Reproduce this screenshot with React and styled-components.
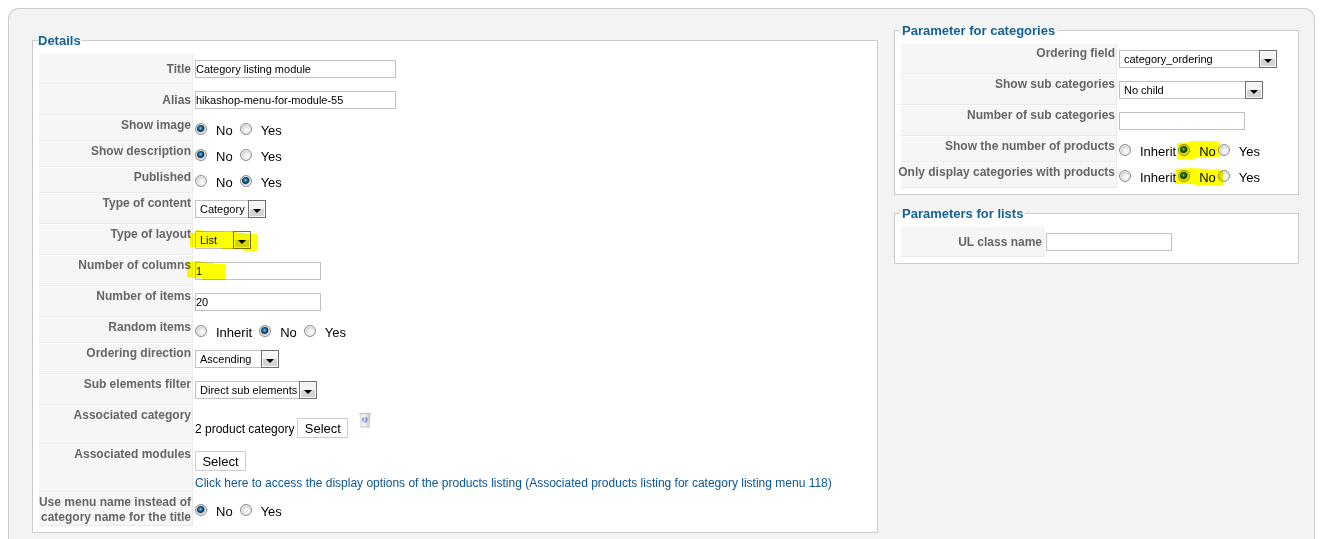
import React from "react";
import styled, { createGlobalStyle } from "styled-components";

const GlobalStyle = createGlobalStyle`
  *, *::before, *::after { box-sizing: border-box; }
  body {
    margin: 0;
    background: #fff;
    color: #000;
    font: 12px/15px "Liberation Sans", Arial, Helvetica, sans-serif;
  }
  input, select, button { margin: 0; font-family: inherit; color: inherit; }
`;

const Page = styled.main`
  display: flex;
  min-height: 100vh;
  padding: 8px 5px 0 8px;
`;

const Panel = styled.form`
  flex: 1;
  display: grid;
  grid-template-columns: minmax(0, 1fr) minmax(405px, 31%);
  align-items: start;
  gap: 16px;
  padding: 14px 15px 6px 23px;
  border: 1px solid #ccc;
  border-bottom: 0;
  border-radius: 11px 11px 0 0;
  background: #f3f3f3;
`;

const MainColumn = styled.div`
  padding-top: 10px;
`;

const SideColumn = styled.div`
  display: flex;
  flex-direction: column;
  gap: 11px;
`;

const Group = styled.fieldset`
  min-width: 0;
  margin: 0;
  padding: 5px;
  border: 1px solid #ccc;
  background: #fff;
`;

const GroupTitle = styled.legend`
  padding: 0 ${(p) => (p.$inset ? 2 : 0)}px;
  color: #146295;
  font-size: 13px;
  font-weight: bold;
`;

const Table = styled.table`
  border-collapse: separate;
  border-spacing: 1px;
`;

const Key = styled.th`
  width: ${(p) => p.$width}px;
  padding: 2px 1px 0 0;
  border-right: 1px solid #e9e9e9;
  border-bottom: 1px solid #e9e9e9;
  background: #f6f6f6;
  color: #666;
  font-weight: bold;
  text-align: right;
  vertical-align: ${(p) => (p.$middle ? "middle" : "top")};
`;

const KeyText = styled.div`
  margin-left: -4px;
`;

const Value = styled.td`
  padding: 1px;
`;

const Field = styled.div`
  position: relative;
  display: flex;
  width: max-content;
  margin: 5px 0;
`;

const TextBox = styled.input`
  width: ${(p) => (p.$long ? 201 : 126)}px;
  height: 18px;
  padding: 0;
  border: 1px solid #c0c0c0;
  background: #fff;
  font-size: 11px;
`;

const Dropdown = styled.select`
  appearance: none;
  width: ${(p) => p.$width}px;
  height: 18px;
  padding: 0 18px 0 4px;
  border: 1px solid #c0c0c0;
  border-radius: 0;
  background: #fff;
  font-size: 11px;
`;

const DropArrow = styled.span`
  position: absolute;
  top: 0;
  right: 0;
  display: flex;
  align-items: flex-end;
  justify-content: center;
  width: 18px;
  height: 18px;
  padding-bottom: 4px;
  border: 1px solid #707070;
  background: linear-gradient(#f4f4f4 50%, #d4d4d4 50%);
  box-shadow: inset 0 0 0 1px #f8f8f8;
  pointer-events: none;
`;

const RadioSet = styled.div`
  position: relative;
  display: flex;
  gap: ${(p) => (p.$tight ? 2 : 7)}px;
  width: max-content;
  padding: 6px 0 2px;
`;

const RadioLabel = styled.label`
  display: flex;
  align-items: baseline;
  gap: 9px;
  font-size: 13px;
`;

const Radio = styled.input`
  appearance: none;
  width: 12px;
  height: 12px;
  border: 1px solid #8e8f8f;
  border-radius: 50%;
  background: radial-gradient(circle at 60% 60%, #f6f6f6 20%, #c4c8cc 75%);
  box-shadow: inset 0 0 0 1px #f0f0f0;

  &:checked {
    background: radial-gradient(circle at 45% 42%, #8fdcff 0, #2a86b8 16%, #0c3c5e 36%, #12304a 40%, #d4d8db 56%);
  }
`;

const PushButton = styled.button`
  min-width: 51px;
  height: 20px;
  padding: 1px 6px 0;
  border: 1px solid #ccc;
  background: #fff;
  font-size: 13px;
  line-height: 17px;
`;

const IconButton = styled.button`
  display: flex;
  padding: 0;
  border: 0;
  background: none;
`;

const CategoryPick = styled.div`
  display: flex;
  align-items: flex-start;
  gap: 9px;
  padding: 5px 0;
`;

const PickedItem = styled.div`
  display: flex;
  align-items: baseline;
  gap: 3px;
  padding-top: 6px;
`;

const ModulePick = styled.div`
  display: flex;
  flex-direction: column;
  align-items: flex-start;
  gap: 5px;
  padding-top: 5px;
`;

const OptionsLink = styled.a`
  color: #0b5590;
  text-decoration: none;
`;

const Marker = styled.svg`
  position: absolute;
  left: ${(p) => p.$left}px;
  top: ${(p) => p.$top}px;
  mix-blend-mode: multiply;
  pointer-events: none;
  fill: #ff0;
`;

const MARKS = {
  layout: { left: -5, top: -1, points: "0,3 6,3 6,0 11,0 11,1 43,2 60,4 68,4 68,20 66,21 53,21 53,19 32,19 32,18 5,17 0,17" },
  columns: { left: -8, top: -1, points: "0,1 6,1 6,0 14,0 14,1 27,2 27,3 38,3 38,19 15,19 15,17 4,17 4,16 0,16" },
  count: { left: 58, top: 3, points: "0,2 13,1 13,0 37,0 42,1 42,16 18,16 18,18 0,18" },
  only: { left: 56, top: 4, points: "0,1 17,0 30,1 44,2 48,3 48,17 38,18 22,18 18,16 0,16" },
};

function Highlight({ mark }) {
  if (!mark) return null;
  const { left, top, points } = MARKS[mark];
  return (
    <Marker $left={left} $top={top} width="70" height="22" aria-hidden="true">
      <polygon points={points} />
    </Marker>
  );
}

function Row({ id, label, keyWidth, middle, children }) {
  return (
    <tr>
      <Key scope="row" $width={keyWidth} $middle={middle}>
        <KeyText>{id ? <label htmlFor={id}>{label}</label> : label}</KeyText>
      </Key>
      <Value>{children}</Value>
    </tr>
  );
}

function TextRow({ id, label, value = "", long, mark, ...row }) {
  return (
    <Row id={id} label={label} {...row}>
      <Field>
        <TextBox id={id} type="text" defaultValue={value} $long={long} />
        <Highlight mark={mark} />
      </Field>
    </Row>
  );
}

function SelectRow({ id, label, value, width, mark, ...row }) {
  return (
    <Row id={id} label={label} {...row}>
      <Field>
        <Dropdown id={id} $width={width}>
          <option>{value}</option>
        </Dropdown>
        <DropArrow>
          <svg width="8" height="6" aria-hidden="true">
            <path d="M0 2h8L4 6z" />
          </svg>
        </DropArrow>
        <Highlight mark={mark} />
      </Field>
    </Row>
  );
}

function RadioRow({ name, label, options = ["No", "Yes"], value, tight, mark, ...row }) {
  return (
    <Row label={label} {...row}>
      <RadioSet role="radiogroup" aria-label={label} $tight={tight}>
        {options.map((option) => (
          <RadioLabel key={option}>
            <Radio type="radio" name={name} value={option} defaultChecked={option === value} />
            {option}
          </RadioLabel>
        ))}
        <Highlight mark={mark} />
      </RadioSet>
    </Row>
  );
}

function TrashIcon() {
  return (
    <svg width="16" height="16" viewBox="0 0 16 16" aria-hidden="true">
      <defs>
        <linearGradient id="bin" x1="0" x2="1">
          <stop offset="0" stopColor="#dcdcdc" />
          <stop offset="0.45" stopColor="#f7f7f7" />
          <stop offset="1" stopColor="#bdbdbd" />
        </linearGradient>
      </defs>
      <path d="M2.5 1.5h11l-1 14h-9z" fill="url(#bin)" />
      <path d="M2 .8h12v1.4H2z" fill="#d6d6d6" />
      <path d="M3 1.2h10v.6H3z" fill="#b4b4b4" />
      <path d="M3.5 14.5h9v1h-9z" fill="#c6c6c6" />
      <circle cx="7.8" cy="7.8" r="2" fill="none" stroke="#6f91d2" strokeWidth="1.6" strokeDasharray="3.4 .8" />
    </svg>
  );
}

const THREE_WAY = ["Inherit", "No", "Yes"];

export default function App() {
  return (
    <>
      <GlobalStyle />
      <Page>
        <Panel onSubmit={(e) => e.preventDefault()}>
          <MainColumn>
            <Group>
              <GroupTitle>Details</GroupTitle>
              <Table>
                <tbody>
                  <TextRow id="title" label="Title" value="Category listing module" long middle keyWidth={154} />
                  <TextRow id="alias" label="Alias" value="hikashop-menu-for-module-55" long middle />
                  <RadioRow name="image" label="Show image" value="No" />
                  <RadioRow name="description" label="Show description" value="No" />
                  <RadioRow name="published" label="Published" value="Yes" />
                  <SelectRow id="content" label="Type of content" value="Category" width={71} />
                  <SelectRow id="layout" label="Type of layout" value="List" width={56} mark="layout" />
                  <TextRow id="columns" label="Number of columns" value="1" mark="columns" />
                  <TextRow id="items" label="Number of items" value="20" />
                  <RadioRow name="random" label="Random items" options={THREE_WAY} value="No" />
                  <SelectRow id="direction" label="Ordering direction" value="Ascending" width={84} />
                  <SelectRow id="filter" label="Sub elements filter" value="Direct sub elements" width={122} />
                  <Row label="Associated category">
                    <CategoryPick>
                      <PickedItem>
                        <span>2 product category</span>
                        <PushButton type="button">Select</PushButton>
                      </PickedItem>
                      <IconButton type="button" aria-label="Remove category">
                        <TrashIcon />
                      </IconButton>
                    </CategoryPick>
                  </Row>
                  <Row label="Associated modules">
                    <ModulePick>
                      <PushButton type="button">Select</PushButton>
                      <OptionsLink href="#options">
                        Click here to access the display options of the products listing (Associated products listing for category listing menu 118)
                      </OptionsLink>
                    </ModulePick>
                  </Row>
                  <RadioRow name="menuname" label="Use menu name instead of category name for the title" value="No" />
                </tbody>
              </Table>
            </Group>
          </MainColumn>
          <SideColumn>
            <Group>
              <GroupTitle $inset>Parameter for categories</GroupTitle>
              <Table>
                <tbody>
                  <SelectRow id="field" label="Ordering field" value="category_ordering" width={158} keyWidth={216} />
                  <SelectRow id="children" label="Show sub categories" value="No child" width={144} />
                  <TextRow id="subcount" label="Number of sub categories" />
                  <RadioRow name="count" label="Show the number of products" options={THREE_WAY} value="No" tight mark="count" />
                  <RadioRow name="only" label="Only display categories with products" options={THREE_WAY} value="No" tight mark="only" />
                </tbody>
              </Table>
            </Group>
            <Group>
              <GroupTitle $inset>Parameters for lists</GroupTitle>
              <Table>
                <tbody>
                  <TextRow id="ulclass" label="UL class name" middle keyWidth={143} />
                </tbody>
              </Table>
            </Group>
          </SideColumn>
        </Panel>
      </Page>
    </>
  );
}
